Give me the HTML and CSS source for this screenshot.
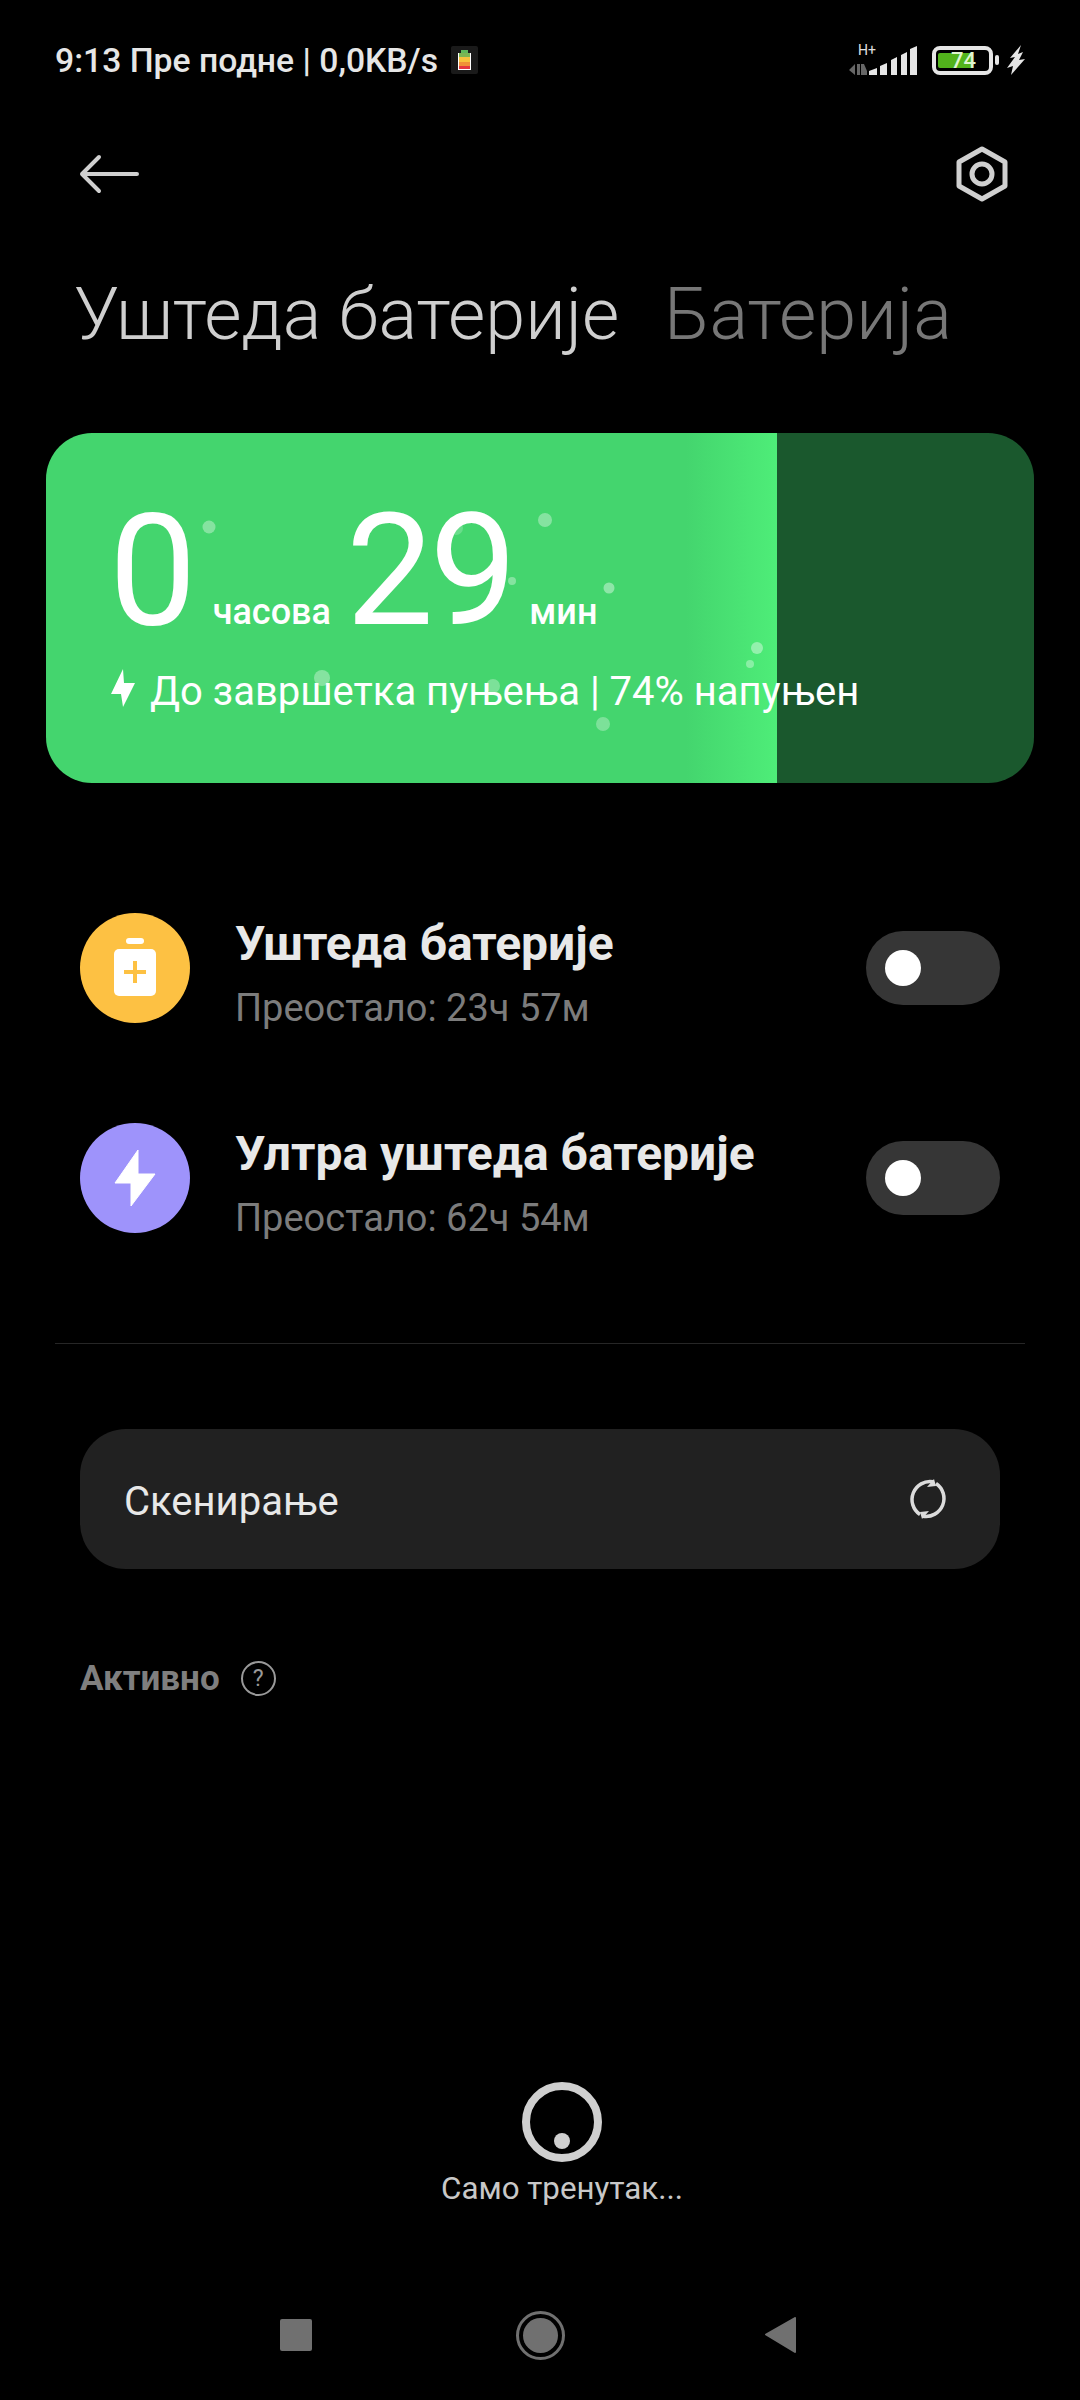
FILE: index.html
```html
<!DOCTYPE html>
<html lang="sr">
<head>
  <meta charset="UTF-8" />
  <meta name="viewport" content="width=device-width, initial-scale=1.0" />
  <title>Уштеда батерије</title>
  <link rel="stylesheet" href="styles.css">
</head>
<body>

<div class="statusbar">
  <div class="status-left">
    <span>9:13 Пре подне | 0,0KB/s</span>
    <svg class="mini-batt" width="28" height="28" viewBox="0 0 28 28">
      <rect width="27" height="28" rx="2" fill="#1a1a1a"/>
      <rect x="7" y="7" width="13" height="17" fill="#fff"/>
      <rect x="10" y="4" width="7" height="3" fill="#5fb85a"/>
      <rect x="8" y="7" width="11" height="4" fill="#7cb553"/>
      <rect x="8" y="11" width="11" height="5" fill="#f7c23c"/>
      <rect x="8" y="16" width="11" height="4" fill="#f09037"/>
      <rect x="8" y="20" width="11" height="3" fill="#e5363f"/>
    </svg>
  </div>
  <div class="status-right">
    <svg width="70" height="40" viewBox="0 0 70 40">
      <text x="10" y="15" class="net-label">H+</text>
      <path d="M7 24v11l-6-5zM9 24h3v11H9zM13 24h3l3 7v4h-6z" fill="#666"/>
      <path d="M21 35v-4l8-3v7zM32 35v-9l7-3v12zM43 35V20l6-3v18zM53 35V15l6-3v23zM62 35V9l7-3v29z" fill="#e6e6e6"/>
    </svg>
    <div class="batt">
      <div class="batt-fill"></div>
      <span class="batt-num">74</span>
    </div>
    <div class="batt-tip"></div>
    <svg class="batt-bolt" width="18" height="30" viewBox="0 0 18 30">
      <path d="M14 0L3 13l5-1-8 11 6-2-2 9 14-16-6 1 4-8-5 2z" fill="#e6e6e6"/>
    </svg>
  </div>
</div>

<header class="topbar">
  <svg width="60" height="40" viewBox="0 0 60 40" fill="none" stroke="#d0d0d0" stroke-width="4" stroke-linecap="round" stroke-linejoin="round">
    <path d="M58 20H3M20 3L3 20l17 17"/>
  </svg>
  <svg width="52" height="56" viewBox="0 0 52 56" fill="none" stroke="#d0d0d0" stroke-width="5" stroke-linejoin="round">
    <path d="M26 3l23 13v24L26 53 3 40V16z"/>
    <circle cx="26" cy="28" r="10"/>
  </svg>
</header>

<div class="tabs">
  <span class="tab active">Уштеда батерије</span>
  <span class="tab">Батерија</span>
</div>

<section class="charge-card">
  <div class="time-row">
    <span class="big">0</span>
    <span class="unit">часова</span>
    <span class="big big-min">29</span>
    <span class="unit unit-min">мин</span>
  </div>
  <div class="charge-info">
    <svg class="info-bolt" width="26" height="40" viewBox="0 0 26 40"><path d="M13 1L1 26h10l2 13 12-24H14z" fill="#fff"/></svg>
    <span>До завршетка пуњења | 74% напуњен</span>
  </div>
  <svg class="bubbles" width="988" height="350" viewBox="0 0 988 350" fill="#fff">
    <circle cx="163" cy="94" r="6.5" opacity=".35"/>
    <circle cx="410" cy="95" r="7" opacity=".2"/>
    <circle cx="499" cy="87" r="7" opacity=".35"/>
    <circle cx="466" cy="148" r="4" opacity=".35"/>
    <circle cx="563" cy="155" r="5.5" opacity=".4"/>
    <circle cx="276" cy="245" r="8" opacity=".35"/>
    <circle cx="447" cy="253" r="7" opacity=".3"/>
    <circle cx="711" cy="215" r="6" opacity=".4"/>
    <circle cx="704" cy="231" r="4" opacity=".35"/>
    <circle cx="557" cy="291" r="7" opacity=".3"/>
  </svg>
</section>

<section class="modes">
  <div class="mode">
    <div class="mode-icon yellow">
      <svg width="42" height="60" viewBox="0 0 42 60">
        <rect x="12" y="0" width="18" height="6" rx="3" fill="#fff"/>
        <rect x="0" y="11" width="42" height="47" rx="5" fill="#fff"/>
        <path d="M19 23h4v9h9v4h-9v9h-4v-9h-9v-4h9z" fill="#fdc143"/>
      </svg>
    </div>
    <div class="mode-text">
      <div class="mode-title">Уштеда батерије</div>
      <div class="mode-sub">Преостало: 23ч 57м</div>
    </div>
    <div class="toggle"><div class="knob"></div></div>
  </div>
  <div class="mode">
    <div class="mode-icon purple">
      <svg width="42" height="58" viewBox="0 0 42 58">
        <path d="M24 1L1 34h16v23l24-32H24z" fill="#fff" stroke="#fff" stroke-linejoin="round"/>
      </svg>
    </div>
    <div class="mode-text">
      <div class="mode-title">Ултра уштеда батерије</div>
      <div class="mode-sub">Преостало: 62ч 54м</div>
    </div>
    <div class="toggle"><div class="knob"></div></div>
  </div>
</section>

<div class="divider"></div>

<button class="scan-btn">
  <span class="scan-label">Скенирање</span>
  <svg width="42" height="42" viewBox="0 0 42 42" fill="none" stroke="#dcdcdc" stroke-width="3.5">
    <path d="M13 36.500A18 18 0 0 1 26 3.800"/>
    <path d="M29 5.500A18 18 0 0 1 16 38.200"/>
    <path d="M27 1l-7 8 9-1zM15 41l7-8-9 1z" fill="#dcdcdc" stroke="none"/>
  </svg>
</button>

<div class="active-head">
  <span>Активно</span>
  <span class="help">?</span>
</div>

<div class="loader">
  <div class="spinner"><div class="spinner-dot"></div></div>
  <div class="loader-text">Само тренутак...</div>
</div>

<nav class="navbar">
  <div class="nav-square"></div>
  <svg class="nav-home" width="49" height="49" viewBox="0 0 49 49">
    <circle cx="24.500" cy="24.500" r="23" fill="none" stroke="#707070" stroke-width="3"/>
    <circle cx="24.500" cy="24.500" r="17.500" fill="#707070"/>
  </svg>
  <svg class="nav-back" width="31" height="36" viewBox="0 0 31 36">
    <path d="M30 1v34L1 17.500z" fill="#707070" stroke="#707070" stroke-width="2" stroke-linejoin="round"/>
  </svg>
</nav>

</body>
</html>
```

FILE: styles.css
```css
* {
  box-sizing: border-box;
}
body {
  margin: 0;
  width: 1080px;
  height: 2400px;
  background: #000;
  color: #fff;
  font-family: 'Roboto', sans-serif;
  display: flex;
  flex-direction: column;
  overflow: hidden;
}
.statusbar {
  height: 60px;
  margin-top: 30px;
  padding: 0 55px 0 55px;
  display: flex;
  justify-content: space-between;
  align-items: center;
}
.status-left {
  display: flex;
  align-items: center;
  gap: 13px;
  font-size: 33.7px;
  font-weight: 500;
  color: #e6e6e6;
}
.status-right {
  display: flex;
  align-items: center;
}
.net-label {
  font-family: 'Roboto', sans-serif;
  font-size: 14px;
  fill: #e0e0e0;
}
.batt {
  position: relative;
  width: 61px;
  height: 29px;
  margin-left: 14px;
  border: 4px solid #e6e6e6;
  border-radius: 8px;
  padding: 3px 0 0 2px;
}
.batt-fill {
  height: 15px;
  width: 35px;
  background: #52b31c;
  border-radius: 2px;
}
.batt-num {
  position: absolute;
  top: -3px;
  left: 15px;
  font-size: 22px;
  font-weight: 500;
  line-height: 28px;
  color: #dff5d0;
}
.batt-tip {
  width: 4px;
  height: 10px;
  margin-left: 2px;
  background: #e6e6e6;
  border-radius: 2px;
}
.batt-bolt {
  margin-left: 8px;
}
.topbar {
  height: 92px;
  margin-top: 38px;
  padding: 0 72px 0 79px;
  display: flex;
  justify-content: space-between;
  align-items: center;
}
.tabs {
  margin-top: 53px;
  padding-left: 74px;
  display: flex;
  gap: 45px;
  font-size: 72px;
  font-weight: 300;
  line-height: 84px;
  white-space: nowrap;
}
.tab {
  color: #777;
}
.tab.active {
  color: #cfcfcf;
}
.charge-card {
  position: relative;
  width: 988px;
  height: 350px;
  margin: 76px 0 0 46px;
  border-radius: 46px;
  overflow: hidden;
  background: linear-gradient(90deg, #44d56e 0, #44d56e 640px, #4eed78 731px, #1a582d 731px);
  padding: 72px 0 0 63px;
}
.time-row {
  display: flex;
  align-items: baseline;
  height: 132px;
}
.big {
  font-size: 156px;
  font-weight: 400;
  line-height: 132px;
  letter-spacing: -4px;
}
.big-min {
  margin-left: 15px;
}
.unit {
  margin-left: 20px;
  font-size: 36px;
  font-weight: 500;
}
.unit-min {
  margin-left: 16px;
}
.charge-info {
  margin-top: 31px;
  margin-left: 1px;
  display: flex;
  align-items: center;
  gap: 14px;
  font-size: 40px;
  white-space: nowrap;
}
.info-bolt {
  margin-top: -8px;
}
.bubbles {
  position: absolute;
  left: 0;
  top: 0;
}
.modes {
  margin-top: 130px;
  padding: 0 80px;
  display: flex;
  flex-direction: column;
  gap: 100px;
}
.mode {
  height: 110px;
  display: flex;
  align-items: center;
}
.mode-icon {
  width: 110px;
  height: 110px;
  border-radius: 50%;
  display: flex;
  align-items: center;
  justify-content: center;
}
.yellow {
  background: #fdc143;
}
.purple {
  background: #9e93fb;
}
.mode-text {
  flex: 1;
  margin-left: 45px;
  padding-top: 10px;
}
.mode-title {
  font-size: 48px;
  font-weight: 700;
  color: #e8e8e8;
  line-height: 54px;
}
.mode-sub {
  margin-top: 15px;
  font-size: 38px;
  color: #7c7c7c;
  line-height: 44px;
}
.toggle {
  width: 134px;
  height: 74px;
  border-radius: 37px;
  background: #363636;
  padding: 19px;
}
.knob {
  width: 36px;
  height: 36px;
  border-radius: 50%;
  background: #fff;
}
.divider {
  height: 1px;
  margin: 110px 55px 0;
  background: #262626;
}
.scan-btn {
  width: 920px;
  height: 140px;
  margin: 85px 0 0 80px;
  padding: 0 51px 0 44px;
  border: none;
  border-radius: 46px;
  background: #212121;
  color: #e8e8e8;
  font-family: inherit;
  font-size: 40px;
  display: flex;
  align-items: center;
  justify-content: space-between;
}
.scan-label {
  margin-top: 4px;
}
.active-head {
  margin: 89px 0 0 80px;
  display: flex;
  align-items: center;
  gap: 21px;
  font-size: 35px;
  font-weight: 700;
  color: #7f7f7f;
}
.help {
  width: 35px;
  height: 35px;
  border: 2px solid #999;
  border-radius: 50%;
  font-size: 23px;
  font-weight: 400;
  color: #999;
  display: flex;
  align-items: center;
  justify-content: center;
}
.loader {
  margin-top: 383px;
  display: flex;
  flex-direction: column;
  align-items: center;
  margin-left: 44px;
  width: 1036px;
}
.spinner {
  width: 80px;
  height: 80px;
  border: 8px solid #cfcfcf;
  border-radius: 50%;
  display: flex;
  justify-content: center;
  padding-top: 43px;
}
.spinner-dot {
  width: 16px;
  height: 16px;
  border-radius: 50%;
  background: #cfcfcf;
}
.loader-text {
  margin-top: 8px;
  font-size: 31.3px;
  color: #c8c8c8;
}
.navbar {
  margin-top: auto;
  margin-bottom: 40px;
  padding-left: 280px;
  display: flex;
  align-items: center;
  height: 50px;
}
.nav-square {
  width: 32px;
  height: 32px;
  border-radius: 2px;
  background: #707070;
}
.nav-home {
  margin-left: 204px;
}
.nav-back {
  margin-left: 200px;
}
```
